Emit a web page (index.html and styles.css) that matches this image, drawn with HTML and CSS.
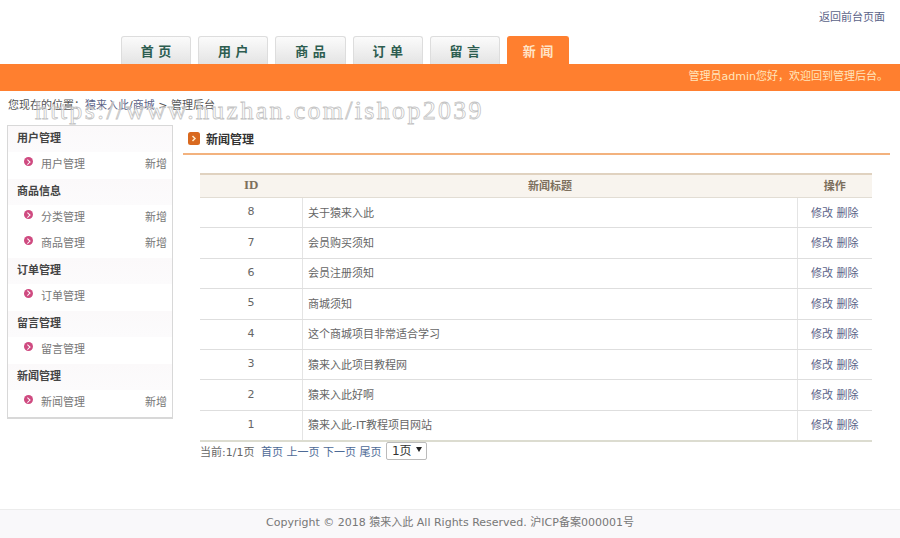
FILE: index.html
```html
<!DOCTYPE html>
<html>
<head>
    <meta charset="utf8"/>
    <title>新闻管理</title>
    <link rel="stylesheet" href="styles.css">
</head>
<body>
<div class="top"><a href="#">返回前台页面</a></div>
<ul class="tabs">
    <li>首 页</li>
    <li>用 户</li>
    <li>商 品</li>
    <li>订 单</li>
    <li>留 言</li>
    <li class="on">新 闻</li>
</ul>
<div class="bar">管理员admin您好，欢迎回到管理后台。</div>
<div class="crumb">您现在的位置：<a href="#">猿来入此</a>/<a href="#">商城</a> &gt; 管理后台</div>
<div class="mark">https://www.huzhan.com/ishop2039</div>
<div class="wrap">
    <div class="side">
        <h3>用户管理</h3>
        <div class="item"><i class="dot"></i><span>用户管理</span><a href="#">新增</a></div>
        <h3>商品信息</h3>
        <div class="item"><i class="dot"></i><span>分类管理</span><a href="#">新增</a></div>
        <div class="item"><i class="dot"></i><span>商品管理</span><a href="#">新增</a></div>
        <h3>订单管理</h3>
        <div class="item"><i class="dot"></i><span>订单管理</span></div>
        <h3>留言管理</h3>
        <div class="item"><i class="dot"></i><span>留言管理</span></div>
        <h3>新闻管理</h3>
        <div class="item"><i class="dot"></i><span>新闻管理</span><a href="#">新增</a></div>
    </div>
    <div class="main">
        <div class="title">
            <svg width="12" height="13" viewBox="0 0 12 13"><rect width="12" height="13" rx="2.5" fill="#d9691f"/><path d="M4.5 4l2.5 2.5L4.5 9" fill="none" stroke="#ffe9c8" stroke-width="1.5"/></svg>
            <span>新闻管理</span>
        </div>
        <table class="list">
            <tr><th class="c1">ID</th><th>新闻标题</th><th class="c3">操作</th></tr>
            <tr><td class="c1">8</td><td>关于猿来入此</td><td class="c3"><a href="#">修改</a> <a href="#">删除</a></td></tr>
            <tr><td class="c1">7</td><td>会员购买须知</td><td class="c3"><a href="#">修改</a> <a href="#">删除</a></td></tr>
            <tr><td class="c1">6</td><td>会员注册须知</td><td class="c3"><a href="#">修改</a> <a href="#">删除</a></td></tr>
            <tr><td class="c1">5</td><td>商城须知</td><td class="c3"><a href="#">修改</a> <a href="#">删除</a></td></tr>
            <tr><td class="c1">4</td><td>这个商城项目非常适合学习</td><td class="c3"><a href="#">修改</a> <a href="#">删除</a></td></tr>
            <tr><td class="c1">3</td><td>猿来入此项目教程网</td><td class="c3"><a href="#">修改</a> <a href="#">删除</a></td></tr>
            <tr><td class="c1">2</td><td>猿来入此好啊</td><td class="c3"><a href="#">修改</a> <a href="#">删除</a></td></tr>
            <tr><td class="c1">1</td><td>猿来入此-IT教程项目网站</td><td class="c3"><a href="#">修改</a> <a href="#">删除</a></td></tr>
        </table>
        <div class="pages">
            当前:1/1页 <a class="first" href="#">首页</a> <a href="#">上一页</a> <a href="#">下一页</a> <a href="#">尾页</a>
            <span class="sel">1页<i></i></span>
        </div>
    </div>
</div>
<div class="foot">Copyright © 2018 猿来入此 All Rights Reserved. 沪ICP备案000001号</div>
</body>
</html>
```

FILE: styles.css
```css
html, body {
    margin: 0;
    padding: 0;
}

body {
    height: 538px;
    display: flex;
    flex-direction: column;
    position: relative;
    overflow: hidden;
    background: #fff;
    color: #666;
    font: 11px "DejaVu Sans", "Noto Sans CJK SC", sans-serif;
}

a {
    color: #5b6388;
    text-decoration: none;
}

.top {
    height: 36px;
    box-sizing: border-box;
    padding: 10px 15px 0 0;
    text-align: right;
    line-height: 16px;
}

.tabs {
    display: flex;
    gap: 7px;
    height: 28px;
    margin: 0;
    padding: 0 0 0 121px;
    list-style: none;
}

.tabs li {
    width: 70.2px;
    box-sizing: border-box;
    border: 1px solid #ddd;
    border-bottom: 0;
    border-radius: 3px 3px 0 0;
    background: linear-gradient(#fbfbfb, #e4e4e4);
    color: #2d5d50;
    font-size: 13px;
    font-weight: bold;
    line-height: 30px;
    text-align: center;
}

.tabs li.on {
    width: 62px;
    border-color: #ff7f2f;
    background: #ff7f2f;
    color: #ffe4c8;
}

.bar {
    height: 27px;
    padding-right: 12px;
    background: #ff7f2f;
    color: #ffe6bd;
    line-height: 26px;
    text-align: right;
}

.crumb {
    height: 34px;
    padding-left: 8px;
    line-height: 30px;
    color: #555;
}

.mark {
    position: absolute;
    left: 35px;
    top: 96px;
    color: rgba(255, 255, 255, 0.3);
    -webkit-text-stroke: 0.8px #c4c4c4;
    font: 26px/30px "Liberation Serif", serif;
    letter-spacing: 2.3px;
}

.wrap {
    display: flex;
    align-items: flex-start;
    padding-left: 7px;
}

.side {
    width: 166px;
    box-sizing: border-box;
    border: 1px solid #d8d8d8;
    border-bottom-width: 2px;
}

.side h3 {
    height: 26px;
    margin: 0;
    padding-left: 9px;
    background: linear-gradient(#fbf9fa, #fcfbfc);
    color: #444;
    font-size: 11px;
    font-weight: bold;
    line-height: 26px;
}

.item {
    display: flex;
    align-items: center;
    box-sizing: border-box;
    height: 27.1px;
    padding: 0 5px 5px 16px;
    color: #777;
}

.item + .item {
    height: 25.7px;
    padding-bottom: 6px;
}

.item span {
    flex: 1;
    margin-left: 8px;
}

.item a {
    color: #777;
}

.dot {
    position: relative;
    width: 9px;
    height: 9px;
    margin-top: -3px;
    border-radius: 50%;
    background: #cf4a80;
}

/* the small chevron inside the bullet */
.dot::after {
    content: "";
    position: absolute;
    left: 2px;
    top: 2.5px;
    width: 2.5px;
    height: 2.5px;
    border-top: 1px solid #fff;
    border-right: 1px solid #fff;
    transform: rotate(45deg);
}

.main {
    flex: 1;
    padding: 0 10px 0 10px;
}

.title {
    display: flex;
    align-items: center;
    gap: 6px;
    height: 26px;
    padding: 0 0 2px 5px;
    border-bottom: 2px solid #f3b27e;
    color: #333;
    font-size: 12px;
    font-weight: bold;
}

.list {
    width: 672px;
    margin: 18px 0 0 17px;
    border-collapse: collapse;
    border-bottom: 2px solid #dcdcd0;
}

.list th {
    height: 20px;
    padding: 0 0 2px;
    border-top: 2px solid #e0d2c0;
    border-bottom: 1px solid #e2ddd4;
    background: #f8f4ee;
    color: #7d6f5c;
    font-size: 11px;
    font-family: "Liberation Serif", "Noto Sans CJK SC", serif;
}

.list th.c1 {
    font-size: 13px;
}

.list td {
    height: 27.4px;
    padding: 0 0 2px 5px;
    border-bottom: 1px solid #dedede;
}

.list td.c1 {
    width: 102px;
    padding-left: 0;
    border-right: 1px solid #e4e4e4;
    text-align: center;
}

.list td.c3 {
    width: 61px;
    border-left: 1px solid #e4e4e4;
    padding-left: 13px;
}

.pages {
    margin: 2px 0 0 17px;
    line-height: 18px;
}

.pages a {
    color: #4d6a96;
}

.pages .first {
    margin-left: 3px;
}

.sel {
    display: inline-flex;
    align-items: flex-start;
    justify-content: space-between;
    width: 41px;
    height: 18px;
    box-sizing: border-box;
    margin: -2px 0 0 1px;
    padding: 0 4px 0 5px;
    border: 1px solid #bbb;
    border-radius: 2px;
    color: #333;
    font-size: 12px;
    line-height: 16px;
    vertical-align: top;
}

.sel i {
    margin-top: 4px;
    border: 3px solid transparent;
    border-top: 5px solid #222;
    border-bottom: 0;
}

.foot {
    margin-top: auto;
    height: 29px;
    box-sizing: border-box;
    border-top: 1px solid #ececec;
    background: #f9f8fa;
    color: #777;
    line-height: 26px;
    text-align: center;
}
```
